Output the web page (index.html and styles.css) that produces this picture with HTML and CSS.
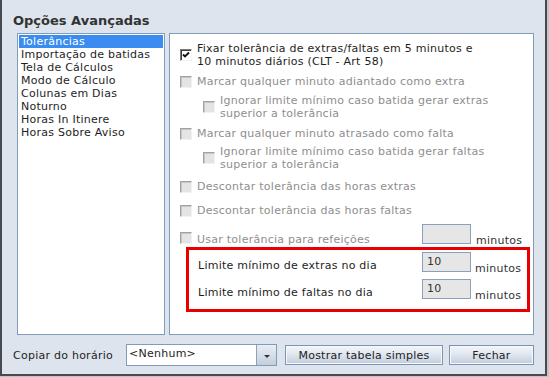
FILE: index.html
```html
<!DOCTYPE html>
<html lang="pt">
<head>
  <meta charset="UTF-8" />
  <title>Opções Avançadas</title>
  <link rel="stylesheet" href="styles.css">
</head>
<body>

  <div class="window">
    <h1 class="title">Opções Avançadas</h1>

    <div class="main">
      <ul class="list">
        <li class="selected">Tolerâncias</li>
        <li>Importação de batidas</li>
        <li>Tela de Cálculos</li>
        <li>Modo de Cálculo</li>
        <li>Colunas em Dias</li>
        <li>Noturno</li>
        <li>Horas In Itinere</li>
        <li>Horas Sobre Aviso</li>
      </ul>

      <div class="panel">
        <div class="opt row-fix">
          <span class="check checked">
            <svg width="8" height="8" viewBox="0 0 8 8"><path d="M1 3.5 L3 5.5 L7 1.5" fill="none" stroke="#111" stroke-width="1.8"/></svg>
          </span>
          <span class="label">Fixar tolerância de extras/faltas em 5 minutos e<br>10 minutos diários (CLT - Art 58)</span>
        </div>

        <div class="opt disabled row-2">
          <span class="check"></span>
          <span class="label">Marcar qualquer minuto adiantado como extra</span>
        </div>

        <div class="opt sub disabled row-3">
          <span class="check"></span>
          <span class="label">Ignorar limite mínimo caso batida gerar extras<br>superior a tolerância</span>
        </div>

        <div class="opt disabled row-4">
          <span class="check"></span>
          <span class="label">Marcar qualquer minuto atrasado como falta</span>
        </div>

        <div class="opt sub disabled row-5">
          <span class="check"></span>
          <span class="label">Ignorar limite mínimo caso batida gerar faltas<br>superior a tolerância</span>
        </div>

        <div class="opt disabled row-6">
          <span class="check"></span>
          <span class="label">Descontar tolerância das horas extras</span>
        </div>

        <div class="opt disabled row-7">
          <span class="check"></span>
          <span class="label">Descontar tolerância das horas faltas</span>
        </div>

        <div class="opt disabled meal">
          <span class="check"></span>
          <span class="label">Usar tolerância para refeições</span>
          <span class="field"></span>
          <span class="unit">minutos</span>
        </div>

        <div class="limits">
          <div class="limit">
            <span class="label">Limite mínimo de extras no dia</span>
            <span class="field">10</span>
            <span class="unit">minutos</span>
          </div>
          <div class="limit">
            <span class="label">Limite mínimo de faltas no dia</span>
            <span class="field">10</span>
            <span class="unit">minutos</span>
          </div>
        </div>
      </div>
    </div>

    <div class="footer">
      <span class="copy-label">Copiar do horário</span>
      <div class="combo">
        <span class="combo-text">&lt;Nenhum&gt;</span>
        <span class="combo-btn"><span class="arrow"></span></span>
      </div>
      <button class="btn btn-table">Mostrar tabela simples</button>
      <button class="btn btn-close">Fechar</button>
    </div>
  </div>

</body>
</html>
```

FILE: styles.css
```css
body {
  margin: 0;
  background-color: #c4c4c4;
  font-family: "DejaVu Sans", Verdana, sans-serif;
  font-size: 11px;
  letter-spacing: 0.25px;
  color: #1e1e1e;
}

.window {
  width: 547px;
  height: 376px;
  box-sizing: border-box;
  background-color: #dde4ee;
  border: 2px solid #474a50;
  border-top: none;
  padding: 0 11px 8px 11px;
}

.title {
  margin: 0;
  height: 33px;
  box-sizing: border-box;
  padding-top: 13px;
  font-size: 13px;
  line-height: 16px;
  font-weight: bold;
  letter-spacing: 0;
  color: #333;
}

.main {
  display: flex;
  gap: 4px;
  height: 302px;
  padding-left: 4px;
}

/* lista da esquerda */
.list {
  width: 148px;
  box-sizing: border-box;
  margin: 0;
  padding: 1px;
  list-style: none;
  background: white;
  border: 1px solid #7f9db9;
}

.list li {
  line-height: 13px;
  padding-left: 2px;
  white-space: nowrap;
}

.list li.selected {
  background-color: #3a8cf0;
  color: white;
}

/* painel de opções */
.panel {
  flex: 1;
  box-sizing: border-box;
  background: white;
  border: 1px solid #7f9db9;
  padding: 8px 3px 0 10px;
}

.opt {
  display: flex;
  align-items: center;
  gap: 5px;
  line-height: 13px;
}

.opt.sub {
  padding-left: 23px;
}

.disabled {
  color: #8e8e8e;
}

.check {
  width: 12px;
  height: 12px;
  flex: none;
  box-sizing: border-box;
  display: flex;
  align-items: center;
  justify-content: center;
  background: #e4e4e4;
  border: 1px solid;
  border-color: #a2a2a2 #f2f2f2 #f2f2f2 #a2a2a2;
  box-shadow: inset 1px 1px #c6c6c6;
}

.check.checked {
  background: white;
  border-color: #7a7a7a #f4f4f4 #f4f4f4 #7a7a7a;
  box-shadow: inset 1px 1px #3c3c3c;
}

.row-2 { margin-top: 7px; }
.row-3 { margin-top: 6px; }
.row-4 { margin-top: 7px; }
.row-5 { margin-top: 5px; }
.row-6 { margin-top: 9px; }
.row-7 { margin-top: 11px; }

.meal {
  align-items: flex-end;
  margin-top: 7px;
}

.meal .label {
  width: 220px;
  margin-bottom: -2px;
}

.meal .unit {
  margin-left: 0;
}

.field {
  width: 49px;
  height: 20px;
  flex: none;
  box-sizing: border-box;
  background: #e6e6e6;
  border: 1px solid #8aa0bc;
  padding: 2px 0 0 4px;
  color: #333;
}

.unit {
  margin-left: 4px;
  margin-bottom: -3px;
  color: #333;
}

.limits {
  margin: 3px 0 0 6px;
  border: 3px solid #e80000;
  padding: 2px 0 10px 9px;
}

.limit {
  display: flex;
  align-items: flex-end;
  line-height: 13px;
}

.limit + .limit {
  margin-top: 7px;
}

.limit .label {
  width: 224px;
}

/* rodapé */
.footer {
  display: flex;
  align-items: center;
  height: 22px;
  margin-top: 9px;
}

.copy-label {
  width: 113px;
  line-height: 13px;
}

.combo {
  width: 151px;
  height: 22px;
  box-sizing: border-box;
  display: flex;
  background: white;
  border: 1px solid #7f9db9;
}

.combo-text {
  flex: 1;
  padding: 2px 0 0 2px;
  line-height: 13px;
}

.combo-btn {
  width: 19px;
  display: flex;
  align-items: center;
  justify-content: center;
  border-left: 1px solid #8ea2bd;
  background: linear-gradient(#e9eef5, #c3cedd);
}

.arrow {
  width: 0;
  height: 0;
  border-left: 3px solid transparent;
  border-right: 3px solid transparent;
  border-top: 3px solid #333;
  margin-top: 3px;
}

.btn {
  height: 20px;
  box-sizing: border-box;
  padding: 0;
  font-family: inherit;
  font-size: 11px;
  letter-spacing: 0.25px;
  color: #222;
  border: 1px solid #7e93b2;
  box-shadow: inset 0 0 0 1px #f6f8fb;
  background: linear-gradient(#f3f6fa, #e1e7f0 45%, #c0ccdc);
}

.btn-table {
  width: 158px;
  margin-left: 8px;
}

.btn-close {
  width: 85px;
  margin-left: 6px;
}
```
